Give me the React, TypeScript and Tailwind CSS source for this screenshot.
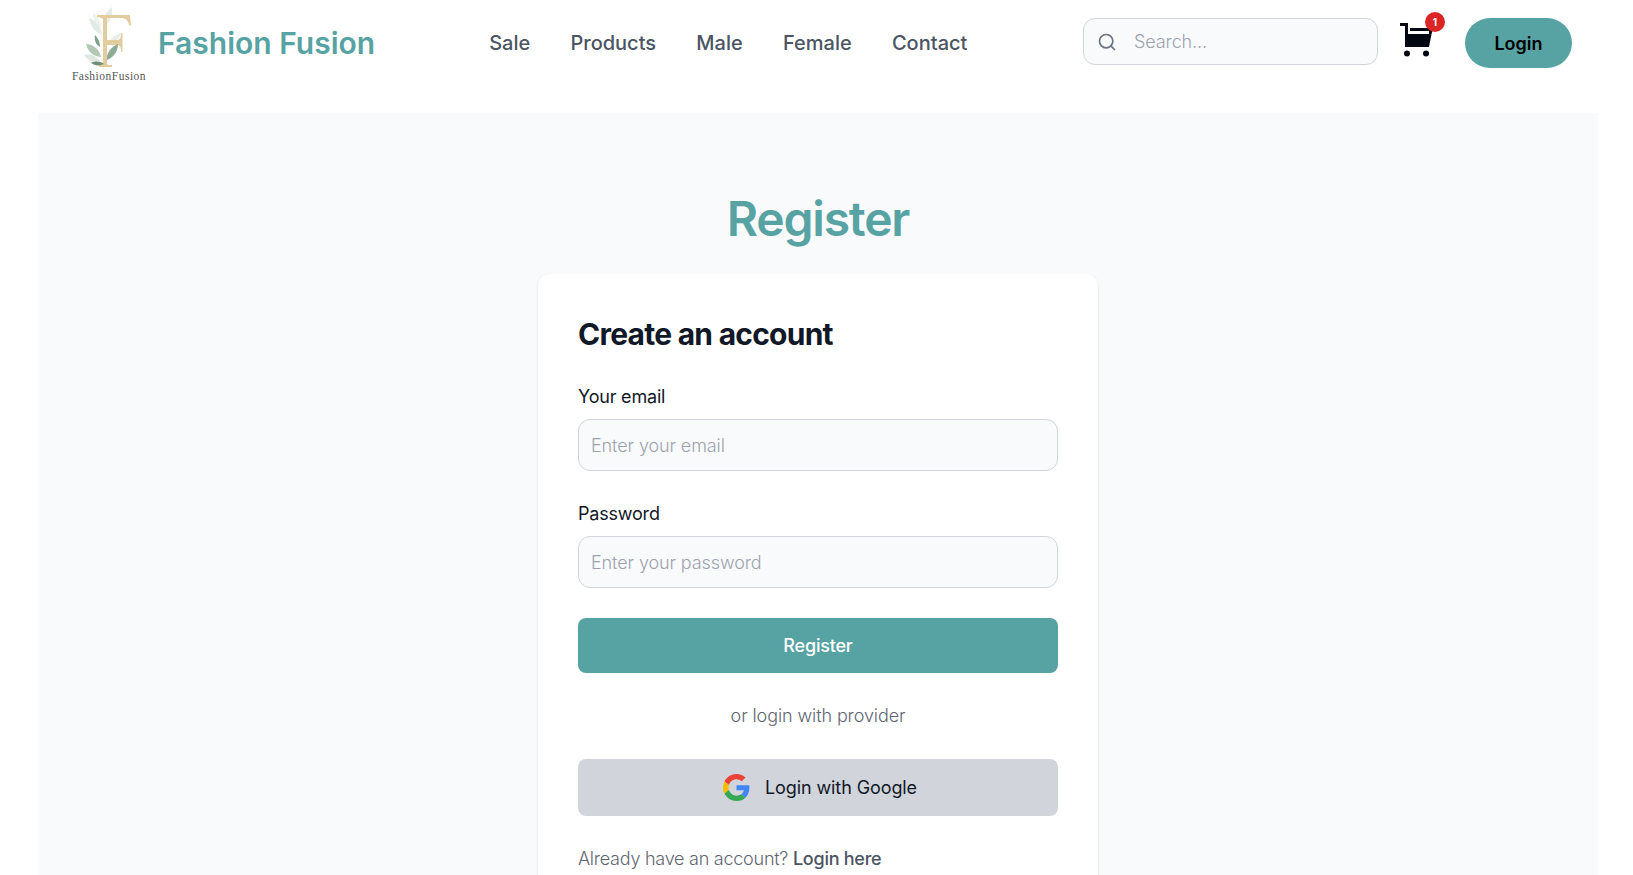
import { Search } from 'lucide-react'

const Logo = () => (
  <div className="relative w-[76px] h-[76px] shrink-0">
    <svg viewBox="0 0 76 76" className="absolute inset-0 w-[76px] h-[76px]">
      <path d="M41 0c1 8-2 15-8 20-2-8 1-15 8-20z" fill="#e4ecea" />
      <path d="M18 11c7 2 12 8 13 17-7-3-12-9-13-17z" fill="#e3ebe6" />
      <path d="M22 6c5 3 8 8 8 14-5-3-8-8-8-14z" fill="#edf2ef" />
      <path d="M50 26c-2 6-6 10-12 12 1-6 5-10 12-12z" fill="#e8eee8" />
      <path d="M26 8h33l1 11-2-1c-1-5-3-7-8-7H36v22h10c3 0 4-2 4-7h1.500v19H50c0-5-1-7-4-7H36v18c0 2 1 2 5 2v2H28v-2c3 0 4 0 4-2V13c0-2-1-2-6-3z" fill="#e3cc9e" />
      <path d="M15 37c6 0 13 4 15 13-7 0-13-5-15-13z" fill="#b4c9b5" />
      <path d="M47 37c0 7-4 13-11 16-1-7 4-13 11-16z" fill="#8eab94" />
      <path d="M13 48c6-2 12 1 16 6-6 2-12 0-16-6z" fill="#dfe8e0" />
      <path d="M24 28c3 3 5 7 5 12-4-2-6-7-5-12z" fill="#7f9f86" />
      <path d="M20 56c4-2 9-2 13 1-4 2-9 2-13-1z" fill="#6f8f78" />
    </svg>
    <span className="absolute left-1/2 -translate-x-1/2 top-[62px] text-[11.5px] leading-[14px] tracking-[0.5px] text-[#555] font-['Liberation_Serif',serif] whitespace-nowrap">
      FashionFusion
    </span>
  </div>
)

const Cart = () => (
  <div className="relative w-[34px] h-[36px]">
    <svg viewBox="0 0 34 36" className="w-[34px] h-[36px]">
      <path d="M0 1h8v24H5V4H0z" fill="#030712" />
      <path d="M6 12h25.500L29 25H6z" fill="#030712" />
      <path d="M10 6h23.500l-2 6H29V9H10z" fill="#030712" />
      <circle cx="7" cy="31.500" r="3" fill="#030712" />
      <circle cx="26" cy="31.500" r="3" fill="#030712" />
    </svg>
    <span className="absolute -top-[10px] -right-[11px] w-5 h-5 rounded-full bg-[#dc2626] text-white text-[10px] font-bold flex items-center justify-center">
      1
    </span>
  </div>
)

const GoogleIcon = () => (
  <svg viewBox="0 0 48 48" className="w-[27px] h-[27px]">
    <path fill="#EA4335" d="M24 9.500c3.540 0 6.710 1.220 9.210 3.600l6.850-6.850C35.900 2.380 30.470 0 24 0 14.620 0 6.510 5.380 2.560 13.220l7.980 6.190C12.430 13.720 17.740 9.500 24 9.500z" />
    <path fill="#4285F4" d="M46.980 24.550c0-1.570-.150-3.090-.380-4.550H24v9.020h12.940c-.580 2.960-2.260 5.480-4.780 7.180l7.730 6c4.510-4.180 7.090-10.360 7.090-17.650z" />
    <path fill="#FBBC05" d="M10.530 28.590c-.480-1.450-.760-2.990-.760-4.590s.270-3.140.760-4.590l-7.980-6.190C.920 16.460 0 20.120 0 24c0 3.880.920 7.540 2.560 10.780l7.970-6.190z" />
    <path fill="#34A853" d="M24 48c6.480 0 11.930-2.130 15.890-5.810l-7.730-6c-2.150 1.450-4.920 2.300-8.160 2.300-6.260 0-11.570-4.220-13.470-9.910l-7.980 6.190C6.510 42.620 14.620 48 24 48z" />
  </svg>
)

export default function App() {
  const navItems = ['Sale', 'Products', 'Male', 'Female', 'Contact']

  return (
    <div className="h-screen overflow-hidden bg-white font-['Inter',sans-serif] flex flex-col">
      {/* header */}
      <header className="h-[113px] shrink-0 flex items-start">
        <div className="flex items-center pl-[71px] pt-[7px]">
          <Logo />
          <span className="ml-[11px] -mt-[4px] text-[30px] leading-9 font-semibold text-[#57a3a3]">Fashion Fusion</span>
        </div>
        <nav className="flex gap-[40.25px] ml-[114px] pt-[29px] text-[20px] leading-7 font-medium text-[#4b5563]">
          {navItems.map((item) => (
            <a key={item}>{item}</a>
          ))}
        </nav>
        <div className="ml-auto flex items-start pr-[61px] pt-[18px]">
          <div className="w-[295px] h-[47px] rounded-xl border border-[#d1d5db] bg-[#f9fafb] flex items-center pl-[13px] gap-[17px]">
            <Search size={20} className="text-[#6b7280]" />
            <span className="text-[18px] font-light tracking-[-0.1px] text-[#9ca3af]">Search...</span>
          </div>
          <div className="ml-[22px] mt-[4px]">
            <Cart />
          </div>
          <button className="ml-[31px] w-[107px] h-[50px] rounded-full bg-[#57a3a3] text-[18px] font-semibold text-black">
            Login
          </button>
        </div>
      </header>

      {/* main */}
      <main className="ml-[38px] w-[1560px] flex-1 bg-[#f9fafb] flex flex-col items-center pt-[82px]">
        <h1 className="text-[48px] leading-[48px] font-semibold tracking-tight text-[#57a3a3]">Register</h1>
        <div className="mt-[31px] w-[560px] bg-white rounded-xl shadow-sm p-10">
          <h2 className="mt-[2px] text-[30px] leading-9 font-bold tracking-tight text-[#111827]">Create an account</h2>
          <label className="block mt-[31px] mb-2 text-[18px] leading-7 tracking-[-0.2px] text-[#111827]">Your email</label>
          <div className="h-[52px] rounded-xl border border-[#d1d5db] bg-[#f9fafb] flex items-center px-3 text-[18px] font-light tracking-[-0.1px] text-[#9ca3af]">
            Enter your email
          </div>
          <label className="block mt-[29px] mb-2 text-[18px] leading-7 tracking-[-0.2px] text-[#111827]">Password</label>
          <div className="h-[52px] rounded-xl border border-[#d1d5db] bg-[#f9fafb] flex items-center px-3 text-[18px] font-light tracking-[-0.1px] text-[#9ca3af]">
            Enter your password
          </div>
          <button className="mt-[30px] w-full h-[55px] rounded-lg bg-[#57a3a3] text-white text-[18px] font-medium tracking-[-0.2px]">
            Register
          </button>
          <p className="mt-[29px] text-center text-[18px] leading-7 font-light tracking-[-0.1px] text-[#5f6673]">or login with provider</p>
          <button className="mt-[29px] w-full h-[57px] pl-[4px] rounded-lg bg-[#d1d5db] flex items-center justify-center gap-[15px] text-[18px] tracking-[-0.1px] text-[#111827]">
            <GoogleIcon />
            Login with Google
          </button>
          <p className="mt-[29px] text-[18px] leading-7 font-light tracking-[-0.25px] text-[#5f6673]">
            Already have an account? <span className="font-medium text-[#4b5563]">Login here</span>
          </p>
        </div>
      </main>
      <div className="h-px shrink-0 bg-[#c4c8cc]" />
    </div>
  )
}
